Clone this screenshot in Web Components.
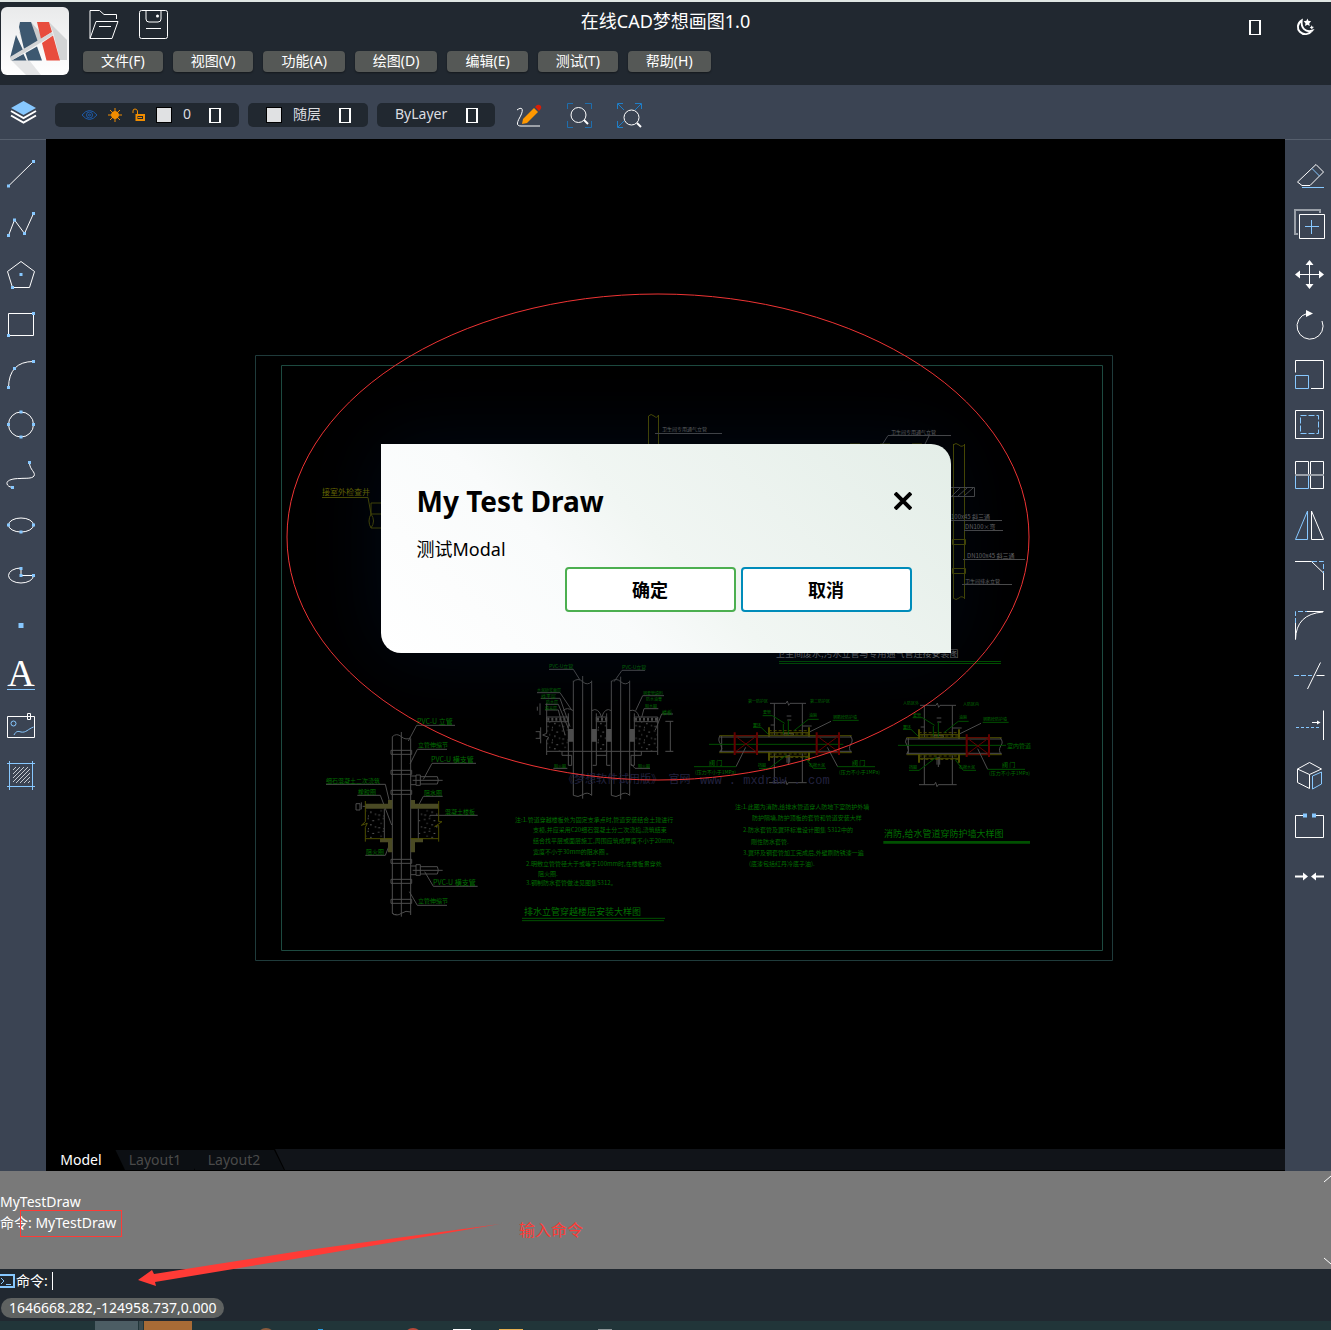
<!DOCTYPE html>
<html lang="zh-CN">
<head>
<meta charset="utf-8">
<title>在线CAD梦想画图1.0</title>
<style>
  body {
    margin: 0;
    font: 14px/20px "Noto Sans", "Noto Sans CJK SC", sans-serif;
    color: #fff;
    background: #212830;
  }
</style>
</head>
<body>
<cad-app>
  <cad-header slot="top" heading="在线CAD梦想画图1.0">
    <cad-menu>文件(F)</cad-menu>
    <cad-menu>视图(V)</cad-menu>
    <cad-menu>功能(A)</cad-menu>
    <cad-menu>绘图(D)</cad-menu>
    <cad-menu>编辑(E)</cad-menu>
    <cad-menu>测试(T)</cad-menu>
    <cad-menu>帮助(H)</cad-menu>
  </cad-header>
  <cad-toolbar slot="top"></cad-toolbar>
  <cad-palette slot="left" tools="line,polyline,polygon,rect,arc,circle,spline,ellipse,ellipsearc,point,text,image,hatch"></cad-palette>
  <cad-drawing></cad-drawing>
  <cad-modal heading="My Test Draw">测试Modal</cad-modal>
  <cad-tabs tabs="Model,Layout1,Layout2"></cad-tabs>
  <cad-palette slot="right" side="right" tools="erase,copy,move,rotate,scale,offset,array,mirror,chamfer,fillet,trim,extend,block,break,join"></cad-palette>
  <cad-command slot="bottom" coords="1646668.282,-124958.737,0.000"></cad-command>
  <cad-taskbar slot="bottom"></cad-taskbar>
</cad-app>

<script>
// small blue grip square used by the draw tools
const grip = (x, y, s = 3) => `<rect x="${x - s / 2}" y="${y - s / 2}" width="${s}" height="${s}" fill="#87c8ff" stroke="none"/>`;

// every tool icon lives in a 30x30 box
const ICONS = {
  line: ["直线", `<path d="M2.5 27L27.5 2.5"/>${grip(2.5, 27)}${grip(27.5, 2.5)}`],
  polyline: ["多段线", `<path d="M2.5 26.5L8.5 11L18.5 24.5L27.5 4.5"/>${grip(2.5, 26.5)}${grip(8.5, 11)}${grip(18.5, 24.5)}${grip(27.5, 4.5)}`],
  polygon: ["多边形", `<path d="M15 2.5L28.5 12.5L23.5 28.5H6.5L1.5 12.5Z"/>${grip(15, 15.5)}${grip(6.5, 28.5)}`],
  rect: ["矩形", `<path d="M2.5 4.5H27.5V26.5H2.5Z"/>${grip(27.5, 4.5)}${grip(2.5, 26.5)}`],
  arc: ["圆弧", `<path d="M2.5 28.5Q3 2.5 27.5 2.5"/>${grip(2.5, 28.5)}${grip(8.5, 9.5)}${grip(27.5, 2.5)}`],
  circle: ["圆", `<circle cx="15" cy="15.5" r="12.5"/>${grip(15, 3)}${grip(2.5, 15.5)}${grip(27.5, 15.5)}${grip(15, 28)}`],
  spline: ["样条曲线", `<path d="M23.5 3.5C23.5 11 30 13 28 17C26 20 19 19 14 19.5C5 19.5 -1 22 1.5 26C3 28 5 28 6.5 28.5"/>${grip(23.5, 3.5)}${grip(6.5, 28.5)}`],
  ellipse: ["椭圆", `<ellipse cx="15" cy="16" rx="12.5" ry="7"/>${grip(2.5, 16)}${grip(27.5, 16)}${grip(15, 23)}`],
  ellipsearc: ["椭圆弧", `<path d="M15 9A12.5 7.5 0 1 0 27.5 16.5H15Z"/>${grip(15, 9.5)}${grip(15, 16.5)}${grip(27.5, 16.5)}`],
  point: ["点", grip(15, 16.5, 5)],
  text: ["文字", `<text x="15" y="27" font-family="Liberation Serif, serif" font-size="38" text-anchor="middle" fill="#fff" stroke="none">A</text><path class="b" d="M1 30.5H29"/>`],
  image: ["图片", `<path d="M1.5 7.5H28.5V28.5H1.5ZM21.5 4.5H24.5V10.5H21.5Z"/><g class="b"><circle cx="7.5" cy="14.5" r="2.5"/><path d="M8 26C10 22 12 22 15 23C20 24 22 20 27.5 18"/></g>`],
  hatch: ["填充", `<path d="M7 11L10 8M7 15L14 8M7 19L18 8M7 23L22 8M10 24L24 10M14 24L24 14M18 24L24 18M22 24L24 22" stroke="#c8ccd2"/><path class="b" d="M3.5 2V31M26.5 2V31M1 4.5H29M1 27.5H29"/>`],
  erase: ["删除", `<path d="M21 4.5L28.5 12L15 25.5H7L2.5 22Z"/><path class="b" d="M17 8.5L24.5 16M7 27.5H29"/>`],
  copy: ["复制", `<path stroke="#9aa0a8" stroke-width="2" d="M25 3V0H0V24H3"/><path d="M4.5 4.5H29.5V28.5H4.5Z"/><path class="b" d="M10 16.5H24M16.5 10V24"/>`],
  move: ["移动", `<path d="M14.5 2V28M2 14.5H28"/><path fill="#fff" stroke="none" d="M14.5 0L18.5 5H10.5ZM14.5 29L18.5 24H10.5ZM0 14.5L5 10.5V18.5ZM29 14.5L24 10.5V18.5Z"/>`],
  rotate: ["旋转", `<path d="M27 11A13 13 0 1 1 12 3.5"/><path fill="#fff" stroke="none" d="M11 0L18 3.5L11 7Z"/>`],
  scale: ["缩放", `<path d="M.5 12.5V.5H28.5V28.5H16"/><path class="b" d="M.5 15.5H13.5V28.5H.5Z"/>`],
  offset: ["偏移", `<path d="M.5 .5H28.5V28.5H.5Z"/><path class="b" stroke-dasharray="6 2" d="M5.5 5.5H23.5V23.5H5.5Z"/>`],
  array: ["阵列", `<path d="M.5 14V1.5H13.5V14M15.5 1.5H28.5V28.5H15.5Z"/><path class="b" d="M.5 16V28.5H13.5V16"/><path stroke="#9aa0a8" stroke-width="2" d="M0 15H29"/>`],
  mirror: ["镜像", `<path d="M16.5 1V29.5H28.5Z"/><path class="b" d="M12.5 1V29.5H.5Z"/>`],
  chamfer: ["倒角", `<path d="M0 1.5H16.5L28.5 13V30"/><path class="b" stroke-dasharray="5 2" d="M17 1.5H28.5V13"/>`],
  fillet: ["圆角", `<path d="M.5 13V29.5Q1 4 28 2M12 1.5H28.5"/><path class="b" stroke-dasharray="5 2" d="M.5 13V1.5H12"/>`],
  trim: ["修剪", `<path d="M25.5 2.5L12.5 29M21.5 15.5H29.5"/><path class="b" stroke-dasharray="5 2" d="M-1 15.5H17"/>`],
  extend: ["延伸", `<path d="M28.5 .5V30M17 12.5H23"/><path fill="#fff" stroke="none" d="M22 10.5L25.5 12.5L22 14.5Z"/><path class="b" stroke-dasharray="3 2" d="M1 17.5H26"/>`],
  block: ["块", `<path d="M14.5 2.5L26.5 9L14.5 14.5L2.5 9ZM2.5 9V22.5L14.5 28.5V14.5"/><path class="b" d="M17.5 16L26.5 12V24L17.5 29Z"/>`],
  break: ["打断", `<path d="M8 5.5H.5V27.5H28.5V5.5H21"/>${grip(10, 5.5, 4)}${grip(19, 5.5, 4)}`],
  join: ["合并", `<path stroke-width="2" d="M0 16.5H9M20 16.5H29"/><path fill="#fff" stroke="none" d="M8 12.5L13 16.5L8 20.5ZM21 12.5L16 16.5L21 20.5Z"/>`],
  open: ["打开", `<path d="M1 28.5V.5H10.5L15 4.5H27.5V9M1 28.5L7 11.5H29L23 28.5Z"/><path d="M10 16.5H22"/>`],
  save: ["保存", `<rect x=".5" y=".5" width="28" height="28" rx="2"/><path d="M7 .5V9Q7 12 10 12H19Q22 12 22 9V.5M7 18.5H22"/><circle cx="18.5" cy="6" r="1.5" fill="#fff" stroke="none"/>`],
  sketch: ["画笔", `<path d="M3 10C10 5 9 12 6 17C2 24 3 26 7 26H26"/><path fill="#ff9800" stroke="none" d="M8 24L9 19L20 8L24 12L13 23Z"/><path fill="#d81e06" stroke="none" d="M21 7L23 5Q25 4 27 6Q28 8 26 10L25 11Z"/>`],
  zoomwindow: ["窗口缩放", `<path stroke="#1f6fae" d="M3.5 9V3.5H9M21 3.5H27.5V9M3.5 21V27.5H9M21 27.5H27.5V21"/><circle cx="14.5" cy="15" r="7.5"/><path stroke-width="2" d="M20 20L24 24"/>`],
  zoomall: ["范围缩放", `<path stroke="#1f7fc8" d="M3.5 9V3.5H9M4 4L10 10M21 3.5H27.5V9M27 4L21 10M3.5 21V27.5H9M4 27L10 21"/><circle cx="17.5" cy="17.5" r="7.5"/><path stroke-width="2" d="M23 23L27 27"/>`],
};

const icon = (name) => `<svg class="icon" viewBox="0 0 30 30" width="30" height="30" aria-hidden="true">${ICONS[name][1]}</svg>`;
const iconButton = (name) => `<button type="button" aria-label="${ICONS[name][0]}">${icon(name)}</button>`;

const BASE = `
  :host, * { box-sizing: border-box; }
  button, select, input { font: inherit; color: inherit; border: 0; padding: 0; margin: 0; background: none; }
  .icon { display: block; overflow: visible; fill: none; stroke: #fff; stroke-width: 1; }
  .icon .b { stroke: #87c8ff; }
`;

class CadElement extends HTMLElement {
  connectedCallback() {
    if (this.shadowRoot) return;
    this.attachShadow({ mode: "open" }).innerHTML = `<style>${BASE}${this.css()}</style>${this.html()}`;
  }
  css() { return ""; }
  html() { return "<slot></slot>"; }
}

customElements.define("cad-app", class extends CadElement {
  css() {
    return `
      :host { display: flex; flex-direction: column; min-height: 100vh; border-top: 2px solid #dfe6e3; overflow: hidden; }
      .work { flex: 1; display: flex; }
      main { flex: 1; min-width: 0; display: flex; flex-direction: column; position: relative; background: #000; }
    `;
  }
  html() {
    return `
      <slot name="top"></slot>
      <div class="work"><slot name="left"></slot><main><slot></slot></main><slot name="right"></slot></div>
      <slot name="bottom"></slot>`;
  }
});

customElements.define("cad-header", class extends CadElement {
  css() {
    return `
      :host { display: grid; height: 83px; background: #212830; }
      /* brand, title and actions share one row; the title stays centred on the page */
      :host > * { grid-area: 1 / 1; }
      .brand { justify-self: start; display: flex; gap: 14px; padding: 5px 0 0 1px; }
      .logo { flex: none; }
      .files { display: flex; gap: 20px; padding: 3px 6px 11px; }
      nav { display: flex; gap: 10px; width: max-content; }
      h1 { justify-self: center; align-self: start; margin: 9px 0 0; font-size: 18px; line-height: 20px; font-weight: 400; }
      .right { justify-self: end; align-self: start; display: flex; gap: 36px; padding: 15px 17px 0 0; }
      .right button { display: grid; place-items: center; height: 20px; }
      .tofu { width: 12px; height: 15px; border: solid #fff; border-width: 1px 2px; }
    `;
  }
  html() {
    return `
      <div class="brand">
        <svg class="logo" width="68" height="68" viewBox="0 0 68 68" role="img" aria-label="MxCAD">
          <defs><linearGradient id="g" x2="0" y2="1"><stop stop-color="#e9eaeb"/><stop offset="1" stop-color="#fff"/></linearGradient></defs>
          <rect width="68" height="68" rx="6" fill="url(#g)"/>
          <path d="M48 15L66 33V53L59 53L52 25Z" fill="#d2d4d5"/>
          <path d="M10 53L25 68H40L28 53Z" fill="#e4e5e6"/>
          <path d="M30 15L40 26V33L24 43L18 24L23 30Z" fill="#c9cbcc"/>
          <path d="M15 28L22 43L9 51ZM10.5 53.5L22.5 47L25.5 53.5ZM19 15H30L37 35L23 42L18 20ZM24.5 46L36 39.5L41 53.5H27Z" fill="#3d5870"/>
          <path d="M36 15H48L51 25L40 32ZM41 36L52 28.5L59 53.5H45.5Z" fill="#e84c3d"/>
          <path d="M9 50L51 25L52 28L10 54Z" fill="#d4d5d6"/>
        </svg>
        <div>
          <div class="files">${iconButton("open")}${iconButton("save")}</div>
          <nav><slot></slot></nav>
        </div>
      </div>
      <h1>${this.getAttribute("heading")}</h1>
      <div class="right">
        <button type="button" aria-label="语言"><span class="tofu"></span></button>
        <button type="button" aria-label="深色模式">
          <svg class="icon" width="17" height="18" viewBox="0 0 18 18">
            <path stroke-width="2" d="M5 2C0 5 0 11 3 14C7 18 13 17 16 13C9 15 4 10 5 2Z"/>
            <path fill="#fff" stroke="none" d="M11 0L12 2.5L15 3L13 5L13.5 8L11 6.5L8.5 8L9 5L7 3L10 2.5ZM15.500 7L16 8.500L18 9L16.500 10L16 12L15 10.500L13.500 9.500L15 8.500Z"/>
          </svg>
        </button>
      </div>`;
  }
});

customElements.define("cad-menu", class extends CadElement {
  css() {
    return `
      :host { display: block; }
      button { display: block; height: 21px; padding: 0 18px 2px; line-height: 19px; border-radius: 4px; background: #555856; box-shadow: 0 1px 2px #0006; white-space: nowrap; }
    `;
  }
  html() { return `<button type="button"><slot></slot></button>`; }
});

// dark rounded drop-down of the layer toolbar
customElements.define("cad-select", class extends CadElement {
  css() {
    return `
      :host { display: flex; align-items: center; height: 24px; border-radius: 5px; background: #212830; color: #dcdde0; }
      select { appearance: none; outline: 0; flex: 1; min-width: 0; height: 24px; padding-bottom: 2px; line-height: 20px; }
      .tofu { width: 12px; height: 15px; border: solid #fff; border-width: 1px 2px; }
    `;
  }
  html() {
    return `<slot></slot>
      <select aria-label="${this.getAttribute("label")}"><option>${this.getAttribute("value")}</option></select>
      <span class="tofu"></span>`;
  }
});

customElements.define("cad-toolbar", class extends CadElement {
  css() {
    return `
      :host { display: flex; align-items: center; height: 54px; padding: 6px 8px 0; background: #3b4453; }
      .layers { margin: 0 16px 4px 0; }
      cad-select { margin-right: 9px; }
      .layer { width: 184px; padding: 0 18px 0 26px; }
      .layer svg { flex: none; margin-right: 10px; }
      .color { width: 120px; padding: 0 17px 0 18px; }
      .type { width: 118px; padding: 0 17px 0 18px; }
      .swatch { flex: none; width: 16px; height: 16px; margin-right: 11px; border: 1px solid #000; background: #e0e1e3; }
      .tools { display: flex; gap: 20px; margin-left: 10px; }
    `;
  }
  html() {
    return `
      <button class="layers" type="button" aria-label="图层">
        <svg class="icon" width="31" height="26" viewBox="0 0 31 26">
          <path fill="#87c8ff" stroke="none" d="M15.5 1L28 8L15.5 15L3 8Z"/>
          <path stroke-width="2" d="M3 11L15.5 18L28 11M3 15.5L15.5 22.5L28 15.5"/>
        </svg>
      </button>
      <cad-select class="layer" label="图层" value="0">
        <svg width="17" height="12" viewBox="0 0 17 12" fill="none" stroke="#1d5aa8"><path d="M1 6Q8.5 -3 16 6Q8.5 15 1 6Z"/><circle cx="8.5" cy="6" r="3"/><circle cx="8.5" cy="6" r="1"/></svg>
        <svg width="14" height="14" viewBox="0 0 14 14" stroke="#f08c00"><circle cx="7" cy="7" r="3.5" fill="#f08c00"/><path d="M7 0V14M0 7H14M2 2L12 12M12 2L2 12"/></svg>
        <svg width="14" height="14" viewBox="0 0 14 14" fill="none" stroke="#f08c00"><path stroke-width="2" d="M4.5 13V7H12V12H4.5"/><path d="M5.5 7V3Q5 1 3 1Q1 1 1 3V5M6 9.5H10"/></svg>
        <span class="swatch"></span>
      </cad-select>
      <cad-select class="color" label="颜色" value="随层"><span class="swatch"></span></cad-select>
      <cad-select class="type" label="线型" value="ByLayer"></cad-select>
      <div class="tools">${["sketch", "zoomwindow", "zoomall"].map(iconButton).join("")}</div>`;
  }
});

customElements.define("cad-palette", class extends CadElement {
  css() {
    return `
      :host { display: flex; flex-direction: column; flex: none; width: 46px; padding: 9px 4px 0 0; border-top: 1px solid #565f6d; background: #3b4453; }
      :host([side="right"]) { padding: 10px 0 0 4px; }
      button { display: grid; place-items: center; height: 50px; }
    `;
  }
  html() { return this.getAttribute("tools").split(",").map(iconButton).join(""); }
});

// labels of the plan: x, baseline, size, colour class, text
const LABELS = [
  [322, 495, 8, "y", "接室外检查井"],
  [662, 431, 5, "w", "卫生间专用通气立管"],
  [891, 434, 5, "w", "卫生间专用通气立管"],
  [951, 519, 6, "w", "100x45 斜三通"],
  [965, 529, 6, "w", "DN100×弯"],
  [967, 558, 6, "w", "DN100x45 斜三通"],
  [965, 583, 5, "w", "卫生间排水立管"],
  [776, 657, 9, "w", "卫生间废水,污水立管与专用通气管连接安装图"],
  [417, 724, 7, "g", "PVC-U 立管"],
  [418, 747, 6, "g", "立管伸缩节"],
  [431, 762, 7, "g", "PVC-U 横支管"],
  [326, 783, 6, "g", "细石混凝土二次浇筑"],
  [358, 794, 6, "g", "橡胶圈"],
  [424, 795, 6, "g", "阻水圈"],
  [445, 814, 6, "g", "混凝土楼板"],
  [366, 854, 6, "g", "阻火圈"],
  [433, 885, 7, "g", "PVC-U 横支管"],
  [418, 903, 6, "g", "立管伸缩节"],
  [549, 668, 5, "g", "PVC-U立管"],
  [622, 669, 5, "g", "PVC-U立管"],
  [537, 692, 4, "g", "水泥砂浆面层"],
  [541, 698, 5, "g", "找平层"],
  [546, 704, 4, "g", "防水层"],
  [545, 710, 4, "g", "填充层"],
  [643, 695, 4, "g", "钢套管填料"],
  [646, 701, 4, "g", "防水油膏"],
  [645, 708, 4, "g", "阻水圈"],
  [662, 714, 5, "g", "楼板"],
  [554, 768, 4, "g", "阻火圈"],
  [638, 768, 4, "g", "阻火圈"],
  [515, 822, 6, "g", "注:1.管道穿越楼板处为固定支承点时,管道安装结合土建进行"],
  [533, 832, 6, "g", "支模,并应采用C20细石混凝土分二次浇捣,浇筑结束"],
  [533, 843, 6, "g", "结合找平层或面层施工,周围应筑成厚度不小于20mm,"],
  [533, 854, 6, "g", "宽度不小于30mm的阻水圈 。"],
  [526, 866, 6, "g", "2.明敷立管管径大于或等于100mm时,在楼板贯穿处"],
  [538, 876, 6, "g", "阻火圈."],
  [526, 885, 6, "g", "3.钢制防水套管做法见图集S312。"],
  [524, 915, 9, "g", "排水立管穿越楼层安装大样图"],
  [748, 703, 4, "g", "第一防护区"],
  [810, 703, 4, "g", "第二防护区"],
  [763, 714, 4, "g", "套管"],
  [753, 727, 4, "g", "翼环"],
  [809, 717, 4, "g", "油麻"],
  [833, 719, 4, "g", "钢筋砼防护墙"],
  [709, 765, 6, "g", "阀 门"],
  [695, 774, 5, "g", "(压力不小于1MPa)"],
  [758, 767, 4, "g", "挡圈"],
  [809, 767, 4, "g", "石棉水泥"],
  [852, 765, 6, "g", "阀 门"],
  [839, 774, 5, "g", "(压力不小于1MPa)"],
  [903, 705, 4, "g", "人防区外"],
  [963, 706, 4, "g", "人防区内"],
  [913, 717, 4, "g", "套管"],
  [903, 729, 4, "g", "翼环"],
  [959, 719, 4, "g", "油麻"],
  [983, 721, 4, "g", "钢筋砼防护墙"],
  [1007, 748, 6, "g", "室内管道"],
  [909, 769, 4, "g", "挡圈"],
  [959, 769, 4, "g", "石棉水泥"],
  [1002, 767, 6, "g", "阀 门"],
  [989, 775, 5, "g", "(压力不小于1MPa)"],
  [735, 809, 6, "g", "注:1.此图为消防,给排水管道穿人防地下室防护外墙"],
  [752, 820, 6, "g", "防护隔墙,防护顶板的套管和管道安装大样"],
  [743, 832, 6, "g", "2.防水套管及翼环标准设计图集 S312中的"],
  [751, 844, 6, "g", "刚性防水套管."],
  [743, 855, 6, "g", "3.翼环及钢套管加工完成后,外壁刷防锈漆一遍"],
  [749, 866, 6, "g", "(底漆包括红丹冷底子油)."],
  [884, 837, 9, "g", "消防,给水管道穿防护墙大样图"],
  [563, 783, 11, "m", "《梦想软件试用版》 官网"],
  [700, 784, 12, "m", "www . mxdraw . com"],
];

customElements.define("cad-drawing", class extends CadElement {
  css() {
    return `
      :host { display: block; flex: 1; }
      .plan { display: block; width: 100%; fill: none; }
      .plan svg { overflow: visible; }
      path, rect, ellipse { vector-effect: non-scaling-stroke; }
      .g { stroke: #005000; } .w { stroke: #4d4d4d; } .y { stroke: #4d4d00; } .r { stroke: #640000; }
      text { stroke: none !important; font-family: "Noto Sans CJK SC", sans-serif; }
      text.g { fill: #007000; } text.w { fill: #6e6e6e; } text.y { fill: #6a6a00; } text.m { fill: #22223f; font-family: "Liberation Mono", "Noto Sans CJK SC", monospace; }
      .yf { fill: #4a4a24; } .wf { fill: #4d4d4d; } .gf { fill: #005000; } .dots { fill: url(#dots); }
    `;
  }
  // wall crossing, in thirds of a drawing unit
  wall() {
    return `
      <path class="w" d="M253 190V285M337 190V285M253 340V428M337 340V428M240 190H288L292 183L296 196L300 190H348M237 428H283L287 421L291 434L295 428H350M242 255H254M338 258H365M290 228H304M292 240H304M291 345V368M295 345V375M299 345V368M282 280H310V286H282Z"/>
      <rect class="y" x="236" y="272" width="122" height="10" stroke-dasharray="3 2"/>
      <rect class="y" x="236" y="342" width="122" height="10" stroke-dasharray="3 2"/>
      <path class="y" stroke-width="2" d="M237 262V290M357 262V290M237 336V362M357 336V362"/>
      <path class="y" d="M237 278H357M237 349H357"/>
      <path class="g" d="M218 227H247L284 250M189 262H213L235 283M386 238H355L312 272M506 241H428M207 385H237L290 345M408 385H370L345 352M280 252V282M295 240V285"/>
      <path class="w" d="M423 244L360 275"/>`;
  }
  valve(x, y) {
    return `<path class="r" stroke-width="2" d="M${x} ${y}v68M${x + 67} ${y}v68"/><path class="r" d="M${x} ${y + 10}h67v50h-67zM${x} ${y + 10}l67 50M${x + 67} ${y + 10}l-67 50"/>`;
  }
  html() {
    return `
    <svg class="plan" viewBox="46 139 1239 1010" role="img" aria-label="给排水安装大样图">
      <defs>
        <pattern id="dots" width="46" height="38" patternUnits="userSpaceOnUse">
          <path fill="#666" d="M4 5h4v3h-4zM19 2h3v4h-3zM33 9h5v3h-5zM12 17h3v3h-3zM26 21h5v3h-5zM41 27h3v4h-3zM5 30h5v3h-5zM20 33h3v3h-3z"/>
        </pattern>
      </defs>
      <path stroke="#1f3b3b" d="M255.5 355.5H1112.5V960.5H255.5Z"/>
      <path stroke="#1d4a40" d="M281.5 365.5H1102.5V950.5H281.5Z"/>

      <!-- riser diagram, mostly behind the dialog -->
      <path class="y" d="M322 497.5H368L371 514M381 503H371V514H381M371 514Q367 521 371 528H381M371 514Q376 521 371 528M648.5 446V416Q651 413 654 416T658.5 415V446M850 444H860M880 444H890M912 444H922"/>
      <path class="y" d="M953.5 444V598M964.5 444V598M953 445Q956 442 959 445T965 444M953 598Q956 601 959 598T965 599M952.5 539.5H965.5V544.5H952.5ZM952.5 568.5H965.5V573.5H952.5Z"/>
      <path class="w" d="M655 433.5H722M951 435.5H888L882 445M929 436L925 444M951 520.5H1002M964 530.5H1003M963 559.5H1025M962 584.5H1012M948 487.5H974.5V496.5H948M964 496L973 488M958 496L967 488M952 496L960 488"/>
      <path class="g" d="M779 661.5H1001M779 663.5H1001"/>

      <!-- riser through slabs -->
      <svg x="300" y="640" width="400" height="290" viewBox="0 0 1200 870">
        <path class="w" d="M277 290V820M332 295V825M304 276V830M277 290Q290 278 304 290T332 293M277 820Q290 830 304 820T332 816M277 820Q283 826 290 823M273 331H335V343H273ZM273 391H335V403H273ZM273 451H335V463H273ZM273 658H335V670H273ZM273 718H335V730H273ZM273 778H335V790H273Z"/>
        <path class="w" d="M332 408H348M332 434H348M348 405H361V436H348ZM361 410H412Q418 421 412 432H361M338 421H428M332 678H348M332 704H348M348 674H361V706H348ZM361 680H412Q418 691 412 702H361M338 691H428"/>
        <path class="w" d="M465 256H350L325 303M441 328H352L330 372M528 370H396L370 418M78 433H256L272 500M172 466H241L275 555M428 469H370L356 495M533 526H390M196 646H256L270 610M533 739H400L374 695M441 796H352L328 755"/>
        <path class="yf" d="M196 491H264V480H277V506H196ZM332 480H345V491H416V506H332ZM240 595H277V637H264V607H240ZM332 595H369V607H345V637H332Z"/>
        <path class="y" d="M196 483V545L184 556L202 550L196 562V605M416 483V545L426 545L404 560L416 556V605M196 596H277M332 596H416"/>
        <path class="dots" d="M198 508H252V594H198ZM356 508H414V594H356Z"/>
        <path class="w" d="M253 506V596M355 506V596M168 491H180V510H168ZM184 487V508M188 499H196"/>

        <path class="w" d="M820 122V466M875 122V466M848 108V476M934 122V466M989 122V466M962 110V478M820 125Q834 112 848 125T875 125M934 125Q948 112 962 125T989 125M820 466Q834 474 848 464T875 466M934 466Q948 474 962 464T989 466"/>
        <path class="w" d="M740 231H805V245H740ZM889 231H920V245H889ZM1003 231H1073V245H1003ZM740 334H1073M740 190V280L728 285L746 292L740 300V345M1073 231V345M805 220V376L815 376V346L786 346V334M889 220V376H878M920 220V376H931M889 346H920M1003 220V376H993V346L1024 346V334M789 212Q800 200 820 212M875 212Q895 200 905 232Q915 200 934 212M989 212Q1010 205 1018 232M1111 244V334M1096 244H1120M1096 334H1120M720 190V225M712 200V212M722 262V310M707 275H720V295H707"/>
        <path class="w" stroke-dasharray="2 2" stroke-width="3" d="M742 238H804M891 238H919M1005 238H1072"/>
        <path class="wf" d="M804 267H820V305H804ZM875 267H890V305H875ZM919 267H934V305H919ZM989 267H1004V305H989Z"/>
        <path class="dots" d="M742 247H803V332H742ZM891 247H918V332H891ZM1005 247H1071V332H1005Z"/>
        <path class="w" d="M747 88H820L840 120M1035 91H966L942 125M711 158H780L815 210M722 175H780L810 260M736 193H775L805 265M736 210H775L795 285M1092 167H1028L1007 212M1075 206H1032L1025 232M1119 222H1085L1066 270M760 385H802M1050 385H1005L993 372"/>
        <path class="g" d="M666 835H1095M666 842H1092"/>
      </svg>

      <!-- pipes through walls -->
      <svg x="690" y="640" width="360" height="240" viewBox="0 0 1080 720">
        ${this.wall()}
        <g transform="translate(450 6)">${this.wall()}</g>
        <path class="w" d="M90 287Q82 300 92 313Q100 326 90 337M95 287V337M480 287Q492 300 482 313Q474 326 484 337M650 293Q642 306 652 318Q660 332 650 343M655 293V343M930 293Q942 306 932 318Q924 332 934 343"/>
        <path class="w" d="M88 291H485M88 334H485M650 297H935M650 340H935"/>
        <path class="y" d="M88 287H485M88 338H485M650 293H935M650 344H935"/>
        <path class="g" d="M57 313H460M624 316H948"/>
        ${this.valve(134, 277)}${this.valve(380, 277)}${this.valve(830, 283)}
        <path class="w" d="M167 322L138 380M412 322L443 380M863 326L893 388"/>
        <path class="g" d="M12 380H138M443 380H555M893 388H1005"/>
        <path class="gf" d="M580 603H1020V611H580Z"/>
      </svg>

      ${LABELS.map(([x, y, size, c, t]) => `<text class="${c}" x="${x}" y="${y}" font-size="${size}">${t}</text>`).join("")}
      <ellipse cx="658" cy="537" rx="371" ry="243" stroke="#f03434"/>
    </svg>`;
  }
});

customElements.define("cad-modal", class extends CadElement {
  css() {
    return `
      :host { position: absolute; inset: 0 0 auto; display: flex; justify-content: center; padding-top: 305px; color: #000; }
      section { width: 570px; padding: 37px 39px 41px 36px; border-radius: 0 20px; background: linear-gradient(45deg, #fff 0%, #f9fbfb 35%, #f1f6f3 50%, #e4eee8 100%); box-shadow: 0 0 80px #00143073; }
      header { display: flex; justify-content: space-between; align-items: center; height: 40px; padding-right: -2px; }
      h2 { margin: 0; font-size: 28px; line-height: 40px; font-weight: 700; }
      header button { display: grid; }
      .body { height: 46px; padding-top: 16px; font-size: 18px; line-height: 24px; }
      footer { display: flex; justify-content: flex-end; gap: 5px; }
      footer button { width: 171px; height: 45px; border: 2px solid #4caf50; border-radius: 4px; background: #fff; font-size: 18px; font-weight: 700; }
      footer .cancel { border-color: #008cba; }
    `;
  }
  html() {
    return `
      <section role="dialog" aria-labelledby="t">
        <header>
          <h2 id="t">${this.getAttribute("heading")}</h2>
          <button type="button" aria-label="关闭"><svg width="18" height="18" viewBox="0 0 18 18" stroke="#000" stroke-width="4"><path d="M1 1L17 17M17 1L1 17"/></svg></button>
        </header>
        <div class="body"><slot></slot></div>
        <footer><button type="button">确定</button><button type="button" class="cancel">取消</button></footer>
      </section>`;
  }
});

customElements.define("cad-tabs", class extends CadElement {
  css() {
    return `
      :host { display: flex; height: 22px; background: #111419; border-bottom: 1px solid #000; }
      button { position: relative; z-index: 0; width: 90px; margin-right: -10px; line-height: 20px; background: #000; color: #4a4a4a; clip-path: polygon(0 0, calc(100% - 10px) 0, 100% 100%, 0 100%); }
      button::before { content: ""; position: absolute; z-index: -1; inset: 1px 1px 0 0; background: #0c0f13; clip-path: inherit; }
      button:first-of-type { z-index: 1; width: 79px; padding-right: 9px; color: #fff; }
      button:first-of-type::before { background: #000; }
      button:nth-of-type(2) { clip-path: polygon(0 0, 100% 0, calc(100% - 10px) 100%, 0 100%); padding-right: 10px; }
      button:nth-of-type(3) { padding-right: 12px; }
    `;
  }
  html() { return this.getAttribute("tabs").split(",").map((t) => `<button type="button">${t}</button>`).join(""); }
});

customElements.define("cad-command", class extends CadElement {
  css() {
    return `
      :host { display: block; position: relative; background: #212830; }
      .log { display: flex; justify-content: space-between; height: 98px; background: #797979; }
      .lines { margin-top: 20px; line-height: 21px; white-space: pre; }
      .scroll { display: flex; flex-direction: column; justify-content: space-between; width: 8px; padding: 4px 0; }
      .prompt { display: flex; align-items: center; height: 24px; }
      .prompt label { display: flex; align-items: center; gap: 1px; }
      .caret { width: 1px; height: 18px; margin-left: 4px; background: #fff; }
      input { flex: 1; outline: 0; height: 20px; }
      output { display: block; width: max-content; margin: 5px 0 3px 1px; padding: 0 8px; border-radius: 10px; background: #5f6261; line-height: 20px; }
      /* hand-drawn note over the log and the prompt */
      .note { position: absolute; left: 0; top: 0; pointer-events: none; }
    `;
  }
  html() {
    return `
      <div class="log">
        <div class="lines">MyTestDraw\n命令: MyTestDraw</div>
        <div class="scroll">
          <svg width="8" height="8" fill="none" stroke="#fff"><path d="M1 7L8 1"/></svg>
          <svg width="8" height="8" fill="none" stroke="#fff"><path d="M1 1L8 7"/></svg>
        </div>
      </div>
      <div class="prompt">
        <label for="cmd"><svg class="icon" width="15" height="14" viewBox="0 0 15 14"><path class="b" stroke-width="2" d="M0 1H14V13H0"/><path class="b" d="M1 4L4 7L1 10M6 10.5H11"/></svg>命令:</label>
        <span class="caret"></span><input id="cmd">
      </div>
      <output>${this.getAttribute("coords")}</output>
      <svg class="note" width="660" height="150" viewBox="0 0 660 150">
        <rect x="20.5" y="39.5" width="101" height="26" fill="none" stroke="#ff3b36"/>
        <path fill="#ff3b36" d="M138 109L152 99L154 103L300 80L500 53L300 87L155 111L156 115Z"/>
        <text x="519" y="65" font-size="16" fill="#ff3b36">输入命令</text>
      </svg>`;
  }
});

customElements.define("cad-taskbar", class extends CadElement {
  css() {
    return `
      :host { display: flex; height: 9px; padding-left: 95px; overflow: hidden; background: #213539; }
      .apps { display: flex; gap: 1px; }
      .apps span { width: 43px; background: #4c5d64; }
      .apps span:nth-child(2) { width: 4px; background: #3b4b50; }
      .apps span:nth-child(3) { width: 48px; background: #a86b36; }
    `;
  }
  html() {
    return `
      <div class="apps"><span></span><span></span><span></span></div>
      <svg width="430" height="9" viewBox="192 0 430 9">
        <circle cx="266" cy="16" r="9" fill="#8a5a3c"/><path d="M318 8h5v1h-5z" fill="#2a9be0"/>
        <circle cx="413" cy="16" r="9" fill="#b8493a"/><path d="M453 8h18v1h-18z" fill="#fff"/><path d="M499 8h24v1h-24z" fill="#e8b050"/><path d="M598 8h14v1h-14z" fill="#8c9496"/>
      </svg>`;
  }
});
</script>
</body>
</html>
